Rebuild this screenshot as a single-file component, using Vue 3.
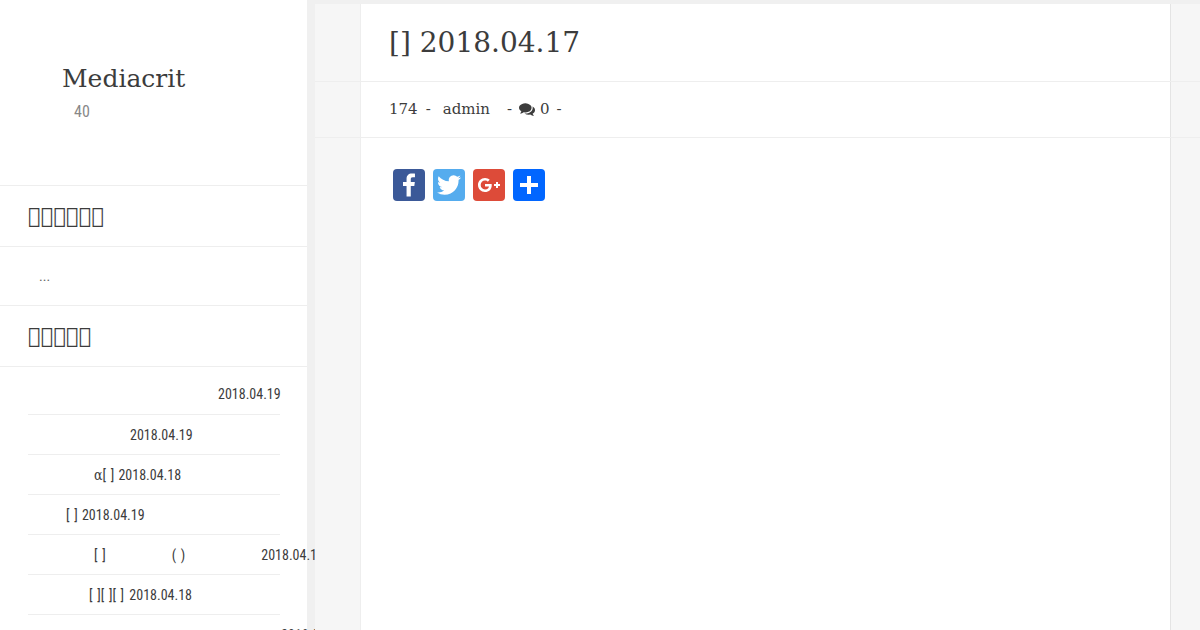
<script setup>
const rows = [
  [{ gap: 190 }, { text: '2018.04.19' }],
  [{ gap: 102 }, { text: '2018.04.19' }],
  [{ gap: 66 }, { text: 'α', alpha: true }, { text: '[\u00a0\u200a] ' }, { gap: 1 }, { text: '2018.04.18' }],
  [{ gap: 38 }, { text: '[\u00a0\u200a] ' }, { gap: 1 }, { text: '2018.04.19' }],
  [{ gap: 66 }, { text: '[\u00a0\u200a]' }, { gap: 66 }, { text: '(\u00a0\u200a)' }, { gap: 76 }, { text: '2018.04.19' }],
  [{ gap: 61 }, { text: '[\u00a0\u200a][\u00a0\u200a][\u00a0\u200a] ' }, { gap: 2 }, { text: '2018.04.18' }],
  [{ gap: 253 }, { text: '2018.04.19' }],
];
</script>

<template>
  <div class="page">
    <aside class="sidebar">
      <div class="brand">
        <h1 class="site-name">Mediacrit</h1>
        <p class="site-sub">40</p>
      </div>
      <h2 class="widget-title">&#xE000;&#xE000;&#xE000;&#xE000;&#xE000;&#xE000;</h2>
      <div class="widget-text">...</div>
      <h2 class="widget-title">&#xE000;&#xE000;&#xE000;&#xE000;&#xE000;</h2>
      <ul class="posts">
        <li v-for="(row, i) in rows" :key="i" class="post">
          <template v-for="(part, j) in row" :key="j">
            <span v-if="part.gap" class="blank" :style="{ width: part.gap + 'px' }"></span>
            <span v-else :class="{ alpha: part.alpha }">{{ part.text }}</span>
          </template>
        </li>
      </ul>
    </aside>

    <main class="main">
      <div class="band title-band">
        <div class="col"><h1 class="post-title">[] 2018.04.17</h1></div>
      </div>
      <div class="band meta-band">
        <div class="col meta">
          <span>174</span><span class="dash">-</span>
          <span class="author">admin</span><span class="dash short">-</span>
          <svg class="comments" viewBox="0 0 1792 1792"><path d="M1408 768q0 139-94 257t-256.5 186.5-353.5 68.5q-86 0-176-16-124 88-278 128-36 9-86 16h-3q-11 0-20.5-8t-11.5-21q-1-3-1-6.5t.5-6.5 2-6l2.5-5 3.5-5.5 4-5 4.5-5 4-4.5q5-6 23-25t26-29.5 22.5-29 25-38.5 20.5-44q-124-72-195-177t-71-224q0-139 94-257t256.5-186.5 353.5-68.5 353.5 68.5 256.5 186.5 94 257zm384 256q0 120-71 224.5t-195 176.5q10 24 20.5 44t25 38.5 22.5 29 26 29.5 23 25q1 1 4 4.5t4.5 5 4 5 3.5 5.5l2.5 5 2 6 .5 6.5-1 6.5q-3 14-13 22t-22 7q-50-7-86-16-154-40-278-128-90 16-176 16-271 0-472-132 58 4 88 4 161 0 309-45t264-129q125-92 192-212t67-254q0-77-23-152 129 71 204 178t75 230z"/></svg>
          <span>0</span><span class="dash end">-</span>
        </div>
      </div>
      <div class="band body-band">
        <div class="col share">
          <svg class="share-icon fb" viewBox="0 0 32 32"><path d="M17.78 27.5V17.008h3.522l.527-4.09h-4.05v-2.61c0-1.182.33-1.99 2.023-1.99h2.166V4.66c-.375-.05-1.66-.16-3.155-.16-3.123 0-5.26 1.905-5.26 5.405v3.016h-3.53v4.09h3.53V27.5h4.223z"/></svg>
          <svg class="share-icon tw" viewBox="0 0 32 32"><path d="M28 8.557a9.913 9.913 0 0 1-2.828.775 4.93 4.93 0 0 0 2.166-2.725 9.738 9.738 0 0 1-3.13 1.194 4.92 4.92 0 0 0-3.593-1.55 4.924 4.924 0 0 0-4.794 6.049c-4.09-.21-7.72-2.17-10.15-5.15a4.942 4.942 0 0 0-.665 2.477c0 1.71.87 3.214 2.19 4.1a4.968 4.968 0 0 1-2.23-.616v.06c0 2.39 1.7 4.38 3.952 4.83-.414.115-.85.174-1.297.174-.318 0-.626-.03-.928-.086a4.935 4.935 0 0 0 4.6 3.42 9.893 9.893 0 0 1-6.114 2.107c-.398 0-.79-.023-1.175-.068a13.953 13.953 0 0 0 7.55 2.213c9.056 0 14.01-7.507 14.01-14.013 0-.213-.005-.426-.015-.637.96-.695 1.795-1.56 2.455-2.55z"/></svg>
          <svg class="share-icon gp" viewBox="0 0 32 32"><path d="M27 15h-2v-2h-2v2h-2v2h2v2h2v-2h2m-15-2v2.4h3.97c-.16 1.03-1.2 3.02-3.97 3.02-2.39 0-4.34-1.98-4.34-4.42s1.95-4.42 4.34-4.42c1.36 0 2.27.58 2.79 1.08l1.9-1.83C15.47 9.69 13.89 9 12 9c-3.87 0-7 3.13-7 7s3.13 7 7 7c4.04 0 6.72-2.84 6.72-6.84 0-.46-.05-.81-.11-1.16H12z"/></svg>
          <svg class="share-icon add" viewBox="0 0 32 32"><path d="M14 7h4v18h-4z"/><path d="M7 14h18v4H7z"/></svg>
        </div>
      </div>
    </main>
  </div>
</template>

<style>
html, body {
  margin: 0;
  overflow: hidden;
}
</style>

<style scoped>
.page {
  display: flex;
  height: 630px;
  overflow: hidden;
  background: #f0f0f0;
  color: #3c3c3c;
  font-family: "DejaVu Serif", serif;
}

/* Sidebar */
.sidebar {
  flex: 0 0 315px;
  box-sizing: border-box;
  width: 315px;
  border-right: 8px solid #f0f0f0;
  background: #fff;
}
.brand {
  box-sizing: border-box;
  height: 186px;
  padding: 63px 0 0 62px;
  border-bottom: 1px solid #eee;
}
.site-name {
  margin: 0;
  font-size: 25px;
  font-weight: 400;
  line-height: 32px;
}
.site-sub {
  margin: 7px 0 0 12px;
  color: #888;
  font-family: Roboto, sans-serif;
  font-size: 16px;
  font-stretch: 75%;
  line-height: 20px;
}
.widget-title {
  box-sizing: border-box;
  height: 61px;
  margin: 0;
  padding: 0 0 0 28px;
  border-bottom: 1px solid #eee;
  font-size: 21px;
  font-weight: 400;
  letter-spacing: 0.1px;
  line-height: 61px;
}
.widget-text {
  box-sizing: border-box;
  height: 59px;
  padding: 20px 0 0 39px;
  border-bottom: 1px solid #eee;
  color: #666;
  font-family: Roboto, sans-serif;
  font-size: 14px;
  font-stretch: 75%;
  line-height: 18px;
}
.posts {
  margin: 0;
  padding: 7px 0 0 28px;
  width: 252px;
  list-style: none;
}
.post {
  box-sizing: border-box;
  height: 40px;
  border-bottom: 1px solid #eee;
  font-family: Roboto, sans-serif;
  font-size: 14px;
  font-stretch: 75%;
  line-height: 40px;
  white-space: nowrap;
}
.post:first-child {
  height: 41px;
}
.blank {
  display: inline-block;
}
.alpha {
  font-family: "DejaVu Serif", serif;
}

/* Main */
.main {
  position: relative;
  flex: 1;
  margin-top: 4px;
  background: #f6f6f6;
}
.band {
  padding: 0 29px 0 45px;
  border-bottom: 1px solid #eee;
}
.col {
  box-sizing: border-box;
  border-left: 1px solid #eee;
  border-right: 1px solid #e4e4e4;
  background: #fff;
  padding-left: 28px;
}
.title-band .col {
  height: 77px;
}
.post-title {
  margin: 0;
  font-size: 28px;
  font-weight: 400;
  line-height: 77px;
}
.meta {
  display: flex;
  align-items: center;
  height: 55px;
  padding-bottom: 2px;
  font-size: 15px;
}
.dash {
  margin: 0 12px 0 8px;
}
.dash.short {
  margin-right: 7px;
}
.dash.end {
  margin-left: 7px;
}
.comments {
  width: 16px;
  height: 16px;
  margin-right: 5px;
  fill: #3c3c3c;
}
.author {
  margin-right: 9px;
}
.body-band {
  border-bottom: 0;
}
.share {
  display: flex;
  gap: 8px;
  height: 492px;
  padding: 31px 0 0 32px;
}
.share-icon {
  width: 32px;
  height: 32px;
  border-radius: 4px;
  fill: #fff;
}
.fb { background: #3b5998; }
.tw { background: #55acee; }
.gp { background: #dd4b39; }
.add { background: #0166ff; }
</style>
